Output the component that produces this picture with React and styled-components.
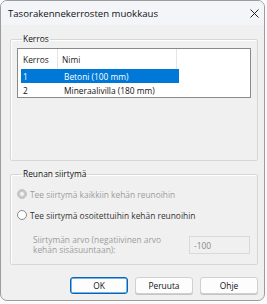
import React from "react";
import styled, { createGlobalStyle } from "styled-components";

const Global = createGlobalStyle`
  html, body { margin: 0; padding: 0; background: #fbfbfb; }
  body { font-family: "Open Sans", "Noto Sans", sans-serif; font-size: 8.4px; color: #1a1a1a; }
  * { box-sizing: border-box; }
`;

const Window = styled.div`
  width: 265px;
  height: 301px;
  border: 1px solid #9c9c9c;
  border-radius: 7px;
  overflow: hidden;
  display: flex;
  flex-direction: column;
  background: #f0f0f0;
`;

const TitleBar = styled.div`
  height: 24px;
  flex: none;
  display: flex;
  align-items: center;
  justify-content: space-between;
  padding: 0 5px 0 7px;
  background: #f3f5f9;
  font-size: 9.6px;
  color: #111;
`;

const Body = styled.div`
  flex: 1;
  display: flex;
  flex-direction: column;
  padding: 8px 6px 7px 9px;
`;

const Group = styled.fieldset`
  margin: 0 0 ${(p) => p.$mb || 0}px 0;
  padding: ${(p) => p.$pad};
  border: 1px solid #d6d6d6;
  box-shadow: inset 1px 1px 0 #fff;
  border-radius: 2px;
  min-width: 0;
  height: ${(p) => p.$h}px;
  display: flex;
  flex-direction: column;
`;

const Legend = styled.legend`
  padding: 0 1px;
  margin-left: 5px;
  line-height: 12px;
  color: #111;
`;

const ListView = styled.div`
  flex: 1;
  background: #fff;
  border: 1px solid #8a8a8a;
  display: flex;
  flex-direction: column;
`;

const Header = styled.div`
  height: 20px;
  display: flex;
  align-items: stretch;
`;

const HeaderCell = styled.div`
  width: ${(p) => p.$w}px;
  padding-left: ${(p) => p.$pl}px;
  display: flex;
  align-items: center;
  border-right: 1px solid #e5e5e5;
  color: #222;
`;

const Row = styled.div`
  height: 14px;
  margin-left: 3px;
  width: 158px;
  display: flex;
  align-items: center;
  background: ${(p) => (p.$sel ? "#0078d7" : "transparent")};
  color: ${(p) => (p.$sel ? "#fff" : "#111")};
`;

const Cell = styled.div`
  width: ${(p) => p.$w}px;
  padding-left: 2px;
  white-space: nowrap;
`;

const RadioRow = styled.label`
  display: flex;
  align-items: center;
  gap: 3px;
  height: 12px;
  margin: ${(p) => p.$m};
  color: ${(p) => (p.$disabled ? "#9d9d9d" : "#333")};
`;

const RadioDot = styled.span`
  width: 10px;
  height: 10px;
  border-radius: 50%;
  flex: none;
  border: 1px solid ${(p) => (p.$disabled ? "#c4c4c4" : "#8a8a8a")};
  background: ${(p) => (p.$disabled ? "#c8c8c8" : "#fff")};
  display: flex;
  align-items: center;
  justify-content: center;
  &::after {
    content: "";
    display: ${(p) => (p.$checked ? "block" : "none")};
    width: 4px;
    height: 4px;
    border-radius: 50%;
    background: #f4f4f4;
  }
`;

const ValueRow = styled.div`
  display: flex;
  justify-content: space-between;
  align-items: center;
  margin: 14px 0 0 16px;
`;

const ValueLabel = styled.div`
  color: #9d9d9d;
  line-height: 10px;
`;

const Input = styled.div`
  width: 61px;
  height: 18px;
  border: 1px solid #d9d9d9;
  background: #f0f0f0;
  color: #8a8a8a;
  padding-left: 4px;
  display: flex;
  align-items: center;
`;

const Buttons = styled.div`
  display: flex;
  justify-content: flex-end;
  gap: 7px;
  margin-top: 12px;
`;

const Button = styled.button`
  width: 58px;
  height: 17px;
  padding: 0;
  font: inherit;
  color: #111;
  background: #fdfdfd;
  border: 1px solid ${(p) => (p.$default ? "#0067c0" : "#d0d0d0")};
  box-shadow: ${(p) => (p.$default ? "inset 0 0 0 0.5px #0067c0" : "0 1px 0 #c4c4c4")};
  border-radius: 3px;
`;

export default function App() {
  return (
    <>
      <Global />
      <Window>
        <TitleBar>
          <span>Tasorakennekerrosten muokkaus</span>
          <svg width="9" height="9" viewBox="0 0 9 9">
            <path d="M0.5 0.5 L8.5 8.5 M8.5 0.5 L0.5 8.5" stroke="#222" strokeWidth="1" />
          </svg>
        </TitleBar>
        <Body>
          <Group $h={128} $mb={7} $pad="3px 6px 6px 6px">
            <Legend>Kerros</Legend>
            <ListView>
              <Header>
                <HeaderCell $w={40} $pl={5}>Kerros</HeaderCell>
                <HeaderCell $w={119} $pl={4}>Nimi</HeaderCell>
              </Header>
              <Row $sel>
                <Cell $w={41}>1</Cell>
                <Cell>Betoni (100 mm)</Cell>
              </Row>
              <Row>
                <Cell $w={41}>2</Cell>
                <Cell>Mineraalivilla (180 mm)</Cell>
              </Row>
            </ListView>
          </Group>
          <Group $h={97} $pad="0 7px 0 6px">
            <Legend>Reunan siirtymä</Legend>
            <RadioRow $disabled $m="8px 0 0 0">
              <RadioDot $disabled $checked />
              Tee siirtymä kaikkiin kehän reunoihin
            </RadioRow>
            <RadioRow $m="9px 0 0 0">
              <RadioDot />
              Tee siirtymä osoitettuihin kehän reunoihin
            </RadioRow>
            <ValueRow>
              <ValueLabel>
                Siirtymän arvo (negatiivinen arvo
                <br />
                kehän sisäsuuntaan):
              </ValueLabel>
              <Input>-100</Input>
            </ValueRow>
          </Group>
          <Buttons>
            <Button $default>OK</Button>
            <Button>Peruuta</Button>
            <Button>Ohje</Button>
          </Buttons>
        </Body>
      </Window>
    </>
  );
}
